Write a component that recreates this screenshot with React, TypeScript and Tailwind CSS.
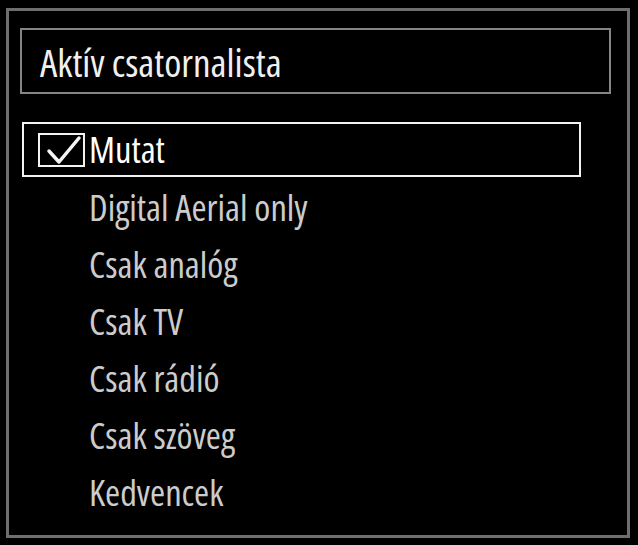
import { useState } from 'react'

const options = [
  'Digital Aerial only',
  'Csak analóg',
  'Csak TV',
  'Csak rádió',
  'Csak szöveg',
  'Kedvencek',
]

function CheckBox() {
  return (
    <div className="w-[47px] h-[34px] border-2 border-[#f2f2f2] flex items-center justify-center shrink-0">
      <svg width="40" height="30" viewBox="0 0 40 30">
        <path d="M7 16 L17 27 L37 3" fill="none" stroke="#f5f5f5" strokeWidth="3.5" strokeLinecap="round" strokeLinejoin="round" />
      </svg>
    </div>
  )
}

export default function App() {
  const [shown] = useState(true)

  return (
    <div className="w-[638px] h-[545px] bg-black pt-[8px] pl-[6px] pr-[8px] pb-[7px] font-['Open_Sans',sans-serif] [font-stretch:75%]">
      <div className="h-full border-[3px] border-[#6e6e6e] flex flex-col">
        <div className="mt-[17px] ml-[11px] mr-[16px] h-[66px] border-2 border-[#858585] flex items-center pl-[18px]">
          <span className="text-[39px] leading-none text-[#f0f0f0]">Aktív csatornalista</span>
        </div>

        <div className="mt-[28px] ml-[13px] mr-[46px] flex flex-col">
          <div className="h-[55px] mb-[2px] border-2 border-[#f2f2f2] flex items-center pl-[14px]">
            {shown && <CheckBox />}
            <span className="ml-[4px] text-[36.5px] leading-none text-white">Mutat</span>
          </div>
          {options.map(label => (
            <div key={label} className="h-[57px] flex items-center pl-[67px]">
              <span className="text-[36.5px] leading-none text-[#cccccc]">{label}</span>
            </div>
          ))}
        </div>
      </div>
    </div>
  )
}
